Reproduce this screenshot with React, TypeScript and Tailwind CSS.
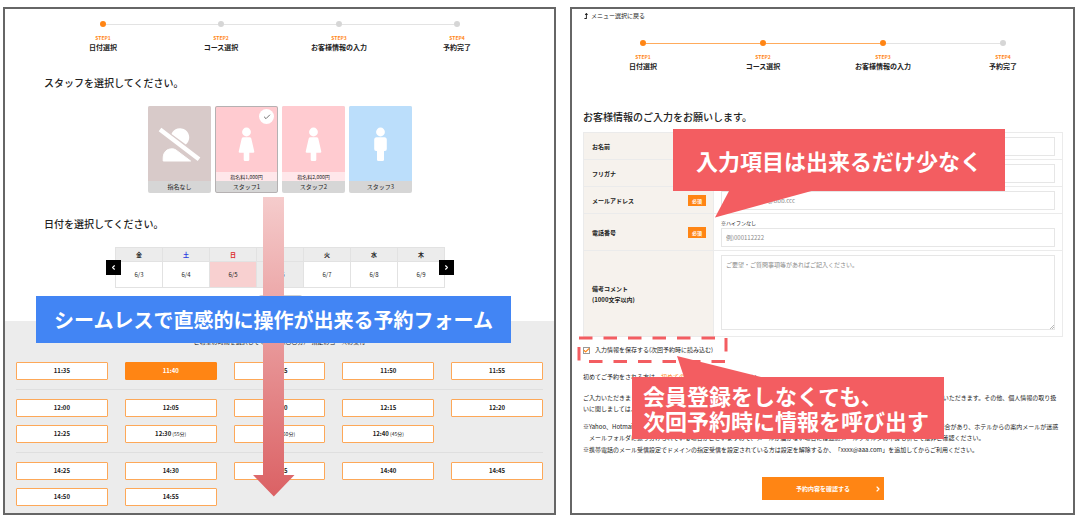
import React from "react";
import { FaLevelUpAlt } from "react-icons/fa";
import { Check, ChevronLeft, ChevronRight } from "lucide-react";

const stepNames = ["日付選択", "コース選択", "お客様情報の入力", "予約完了"];

function Steps({ current }: { current: number }) {
  return (
    <ol className="grid grid-cols-4">
      {stepNames.map((name, i) => {
        const done = i < current;
        const before = i === 0 ? "bg-transparent" : done ? "bg-[#ffab5c]" : "bg-[#e3e3e3]";
        const after =
          i === stepNames.length - 1 ? "bg-transparent" : i + 1 < current ? "bg-[#ffab5c]" : "bg-[#e3e3e3]";
        return (
          <li key={name} className="flex flex-col items-center">
            <div className="flex w-full items-center">
              <span className={`h-px flex-1 ${before}`} />
              <span className={`size-1.5 rounded-full ${done ? "bg-[#ff8514]" : "bg-[#d6d6d6]"}`} />
              <span className={`h-px flex-1 ${after}`} />
            </div>
            <span className="mt-[7px] text-[5px] leading-[8px] font-bold text-[#ff8514]">STEP{i + 1}</span>
            <span className="text-[7px] leading-[10px] font-bold text-[#222]">{name}</span>
          </li>
        );
      })}
    </ol>
  );
}

function NoStaffIcon() {
  return (
    <svg viewBox="0 0 63 66" className="absolute inset-0 size-full" aria-hidden="true">
      <path d="M23.5 28 A9.2 9.2 0 1 1 37.8 38.6 Z" fill="#fff" />
      <path d="M15.2 55 V52 C15.2 46 19 42.8 24 42.8 C25.6 42.8 26.8 43.2 28 44 L42.6 55 Z" fill="#fff" stroke="#fff" strokeWidth="1" strokeLinejoin="round" />
      <path d="M12 23.5 L51 53.3" stroke="#fff" strokeWidth="4.4" />
    </svg>
  );
}

function WomanIcon() {
  return (
    <svg viewBox="0 0 63 66" className="absolute inset-0 size-full" aria-hidden="true">
      <g fill="#fff">
        <circle cx="31.5" cy="26" r="4.4" />
        <path d="M28.6 31.2 h5.8 q1.5 0 1.9 1.4 l3 12.8 q0.2 1.3 -1.2 1.3 h-3.8 v7 q0 1.4 -1.4 1.4 h-2.8 q-1.4 0 -1.4 -1.4 v-7 h-3.8 q-1.4 0 -1.2 -1.3 l3 -12.8 q0.4 -1.4 1.9 -1.4 z" />
      </g>
    </svg>
  );
}

function ManIcon() {
  return (
    <svg viewBox="0 0 63 66" className="absolute inset-0 size-full" aria-hidden="true">
      <g fill="#fff">
        <circle cx="31.5" cy="26" r="4.4" />
        <path d="M27.6 31.2 h7.8 q2.4 0 2.4 2.6 v9.2 q0 1.9 -1.9 1.9 h-0.9 v8.8 q0 1.4 -1.4 1.4 h-4.2 q-1.4 0 -1.4 -1.4 v-8.8 h-0.9 q-1.9 0 -1.9 -1.9 v-9.2 q0 -2.6 2.4 -2.6 z" />
      </g>
    </svg>
  );
}

const staff = [
  { name: "指名なし", fee: "", bg: "bg-[#d8cac9]", icon: <NoStaffIcon />, selected: false },
  { name: "スタッフ1", fee: "指名料1,000円", bg: "bg-[#ffcbd0]", icon: <WomanIcon />, selected: true },
  { name: "スタッフ2", fee: "指名料2,000円", bg: "bg-[#ffcbd0]", icon: <WomanIcon />, selected: false },
  { name: "スタッフ3", fee: "", bg: "bg-[#bbdefb]", icon: <ManIcon />, selected: false },
];

const days = [
  { day: "金", date: "6/3", head: "text-[#222]", cell: "bg-white" },
  { day: "土", date: "6/4", head: "text-[#2b3ce0]", cell: "bg-white" },
  { day: "日", date: "6/5", head: "text-[#dc2626]", cell: "bg-[#f8d0d0]" },
  { day: "月", date: "6/6", head: "text-[#222]", cell: "bg-[#ececec]" },
  { day: "火", date: "6/7", head: "text-[#222]", cell: "bg-white" },
  { day: "水", date: "6/8", head: "text-[#222]", cell: "bg-white" },
  { day: "木", date: "6/9", head: "text-[#222]", cell: "bg-white" },
];

const slotGroups: { time: string; note?: string; selected?: boolean }[][] = [
  [{ time: "11:35" }, { time: "11:40", selected: true }, { time: "11:45" }, { time: "11:50" }, { time: "11:55" }],
  [
    { time: "12:00" },
    { time: "12:05" },
    { time: "12:10" },
    { time: "12:15" },
    { time: "12:20" },
    { time: "12:25" },
    { time: "12:30", note: "(55分)" },
    { time: "12:35", note: "(50分)" },
    { time: "12:40", note: "(45分)" },
  ],
  [
    { time: "14:25" },
    { time: "14:30" },
    { time: "14:35" },
    { time: "14:40" },
    { time: "14:45" },
    { time: "14:50" },
    { time: "14:55" },
  ],
];

function SchedulePanel() {
  return (
    <section className="relative flex flex-col border-2 border-[#666] bg-white">
      <div className="flex flex-1 flex-col pt-3 pr-[38px] pl-[39px]">
        <Steps current={1} />
        <h2 className="mt-6 text-[10px] leading-[14px] font-medium">スタッフを選択してください。</h2>
        <div className="mt-4 flex justify-center gap-1">
          {staff.map((s) => (
            <button
              key={s.name}
              type="button"
              aria-pressed={s.selected}
              className="relative flex w-[63px] flex-col overflow-hidden rounded-xs bg-[#d6d6d6] text-center"
            >
              <span className={`relative block h-[75px] w-full ${s.bg}`}>
                <span className="absolute inset-x-0 top-0 h-[66px]">{s.icon}</span>
                {s.fee && (
                  <span className="absolute inset-x-0 bottom-0 bg-[#ffe7ea] text-[5px] leading-[9px]">{s.fee}</span>
                )}
              </span>
              <span className="block w-full text-[6px] leading-[12px]">{s.name}</span>
              {s.selected && (
                <>
                  <span className="absolute inset-0 rounded-xs border border-[#b5b1b2]" />
                  <span className="absolute top-[3px] right-1 flex size-[15px] items-center justify-center rounded-full bg-white">
                    <Check size={8} strokeWidth={2.5} color="#555" />
                  </span>
                </>
              )}
            </button>
          ))}
        </div>
        <h2 className="mt-6 text-[10px] leading-[14px] font-medium">日付を選択してください。</h2>
        <div className="relative mx-auto mt-4 w-[330px]">
          <table className="w-full table-fixed border-separate border-spacing-0 border-t border-l border-[#e2e2e2] text-center text-[6px] leading-[8px]">
            <thead>
              <tr>
                {days.map((d) => (
                  <th key={d.day} scope="col" className={`h-3.5 border-r border-b border-[#e2e2e2] bg-[#ececec] p-0 font-bold ${d.head}`}>
                    {d.day}
                  </th>
                ))}
              </tr>
            </thead>
            <tbody>
              <tr>
                {days.map((d) => (
                  <td key={d.day} className={`h-[26px] border-r border-b border-[#e2e2e2] p-0 ${d.cell}`}>
                    {d.date}
                  </td>
                ))}
              </tr>
            </tbody>
          </table>
          <button type="button" aria-label="前の週" className="absolute top-[13px] -left-[9px] flex size-[15px] items-center justify-center bg-black text-white">
            <ChevronLeft size={7} strokeWidth={4} />
          </button>
          <button type="button" aria-label="次の週" className="absolute top-[13px] -right-[9px] flex size-[15px] items-center justify-center bg-black text-white">
            <ChevronRight size={7} strokeWidth={4} />
          </button>
        </div>
        <div className="mx-auto mt-[7px] mb-3 h-3.5 w-[43px] rounded-xs bg-[#d0d0d0]" />
      </div>

      <div className="bg-[#ececec] px-[11px] pt-4 pb-[7px]">
        <p className="text-center text-[6px] leading-[10px]">ご希望の時間を選択してください(〇〇分)　指定のコースの受付</p>
        <div className="mt-[15px] flex flex-col">
          {slotGroups.map((group, gi) => (
            <div
              key={gi}
              className={`grid grid-cols-5 gap-x-[17px] gap-y-2 ${gi > 0 ? "border-t border-[#dfdfdf] pt-[9px]" : ""} ${gi < slotGroups.length - 1 ? "pb-[9px]" : ""}`}
            >
              {group.map((s) => (
                <button
                  key={s.time}
                  type="button"
                  className={`h-[18px] rounded-[1px] border text-[6px] leading-[8px] ${s.selected ? "border-[#ff8514] bg-[#ff8514] text-white" : "border-[#fda858] bg-white text-[#222]"}`}
                >
                  <span className="font-bold">{s.time}</span>
                  {s.note && <span className="text-[5px]"> {s.note}</span>}
                </button>
              ))}
            </div>
          ))}
        </div>
      </div>

      <svg className="pointer-events-none absolute top-[188px] left-[248px]" width="42" height="300" viewBox="0 0 42 300" aria-hidden="true">
        <defs>
          <linearGradient id="flow" x1="0" y1="0" x2="0" y2="1">
            <stop offset="0" stopColor="#f5cccc" />
            <stop offset="1" stopColor="#db6164" />
          </linearGradient>
        </defs>
        <path d="M10 0 H31 V278 H41.5 L20.8 299.5 L0 278 H10 Z" fill="url(#flow)" />
      </svg>
      <p className="absolute top-[287px] right-[43px] left-[31px] bg-[#4285f4] text-center text-[20px] leading-[47px] font-bold whitespace-nowrap text-white">
        シームレスで直感的に操作が出来る予約フォーム
      </p>
    </section>
  );
}

function FieldRow({
  id,
  label,
  required,
  children,
}: {
  id: string;
  label: React.ReactNode;
  required?: boolean;
  children: React.ReactNode;
}) {
  return (
    <tr>
      <th scope="row" className="w-[130px] border-r border-b border-[#ebebeb] bg-[#f6f2ed] py-0 pr-[7px] pl-2 text-left align-middle">
        <span className="flex items-center justify-between">
          <label htmlFor={id} className="leading-[11px] font-bold">
            {label}
          </label>
          {required && (
            <span className="w-[18px] bg-[#ff8514] text-center text-[5px] leading-[11px] font-bold text-white">必須</span>
          )}
        </span>
      </th>
      <td className="border-b border-[#ebebeb] px-[7px] pt-1 pb-[3px] align-top">{children}</td>
    </tr>
  );
}

const inputClass =
  "block h-[19px] w-full border border-[#e6e6e6] bg-white px-1 text-[6px] placeholder:text-[#8a8a8a] outline-none";

function CustomerPanel() {
  return (
    <section className="relative border-2 border-[#666] bg-white pt-0.5 pr-2.5 pb-[13px] pl-[11px] text-[6px]">
      <a href="#menu" className="flex items-center gap-0.5 leading-[10px]">
        <FaLevelUpAlt size={6} />
        メニュー選択に戻る
      </a>
      <div className="mt-[19px]">
        <Steps current={3} />
      </div>
      <h2 className="mt-[39px] text-[10px] leading-[14px] font-medium">お客様情報のご入力をお願いします。</h2>
      <form>
        <table className="mt-2 w-full border-separate border-spacing-0 border-t border-r border-l border-[#ebebeb]">
          <tbody>
            <FieldRow id="name" label="お名前" required>
              <input id="name" type="text" className={inputClass} />
            </FieldRow>
            <FieldRow id="kana" label="フリガナ" required>
              <input id="kana" type="text" className={inputClass} />
            </FieldRow>
            <FieldRow id="email" label="メールアドレス" required>
              <input id="email" type="email" placeholder="例)aaaaaaaaaa@bbb.ccc" className={inputClass} />
            </FieldRow>
            <FieldRow id="tel" label="電話番号" required>
              <span className="block text-[5px] leading-[10px]">※ハイフンなし</span>
              <input id="tel" type="tel" placeholder="例)000112222" className={inputClass} />
            </FieldRow>
            <FieldRow
              id="comment"
              label={
                <>
                  備考コメント
                  <br />
                  (1000文字以内)
                </>
              }
            >
              <span className="relative mb-[3px] block">
                <textarea
                  id="comment"
                  placeholder="ご要望・ご質問事項等があればご記入ください。"
                  className="block h-[75px] w-full resize-none border border-[#e6e6e6] bg-white px-1 py-1 text-[6px] leading-[10px] outline-none placeholder:text-[#8a8a8a]"
                />
                <svg className="absolute right-px bottom-px" width="4" height="4" viewBox="0 0 4 4" stroke="#888" strokeWidth="0.6" aria-hidden="true">
                  <path d="M0 4 L4 0 M2 4 L4 2" />
                </svg>
              </span>
            </FieldRow>
          </tbody>
        </table>

        <label className="mt-2 flex items-center gap-[5px] leading-[10px]">
          <span className="relative flex size-[7px]">
            <input
              type="checkbox"
              defaultChecked
              className="peer size-[7px] appearance-none border border-[#999] bg-white"
            />
            <Check size={7} strokeWidth={4} color="#ff8514" className="pointer-events-none absolute inset-0 hidden peer-checked:block" />
          </span>
          入力情報を保存する(次回予約時に読み込む)
        </label>

        <div className="pr-0.5 leading-[11px] [text-spacing-trim:space-all]">
          <p className="mt-4">
            初めてご予約をされる方は、
            <a href="#first" className="text-[#ff8514]">
              初めてのお客様へ
            </a>
            をご確認ください。
          </p>
          <p className="mt-2.5">
            ご入力いただきました個人情報は、ご予約の確認及びご本人様への連絡、サービスの向上を目的とした範囲内で厳重に管理し利用していただきます。その他、個人情報の取り扱いに関しましては、プライバシーポリシーをご確認ください。
          </p>
          <ul className="mt-[7px] space-y-px">
            <li className="pl-1.5 -indent-1.5">
              ※Yahoo、Hotmail、Gmail等のフリーメールアドレスをご利用の場合、ご予約完了メールやお知らせメールが正常に届かないなどの場合があり、ホテルからの案内メールが迷惑メールフォルダに振り分けられている場合がございますので、メールが届かない場合には迷惑メールフォルダの中身も併せて是非ご確認ください。
            </li>
            <li className="pl-1.5 -indent-1.5">
              ※携帯電話のメール受信設定でドメインの指定受信を設定されている方は設定を解除するか、「xxxx@aaa.com」を追加してからご利用ください。
            </li>
          </ul>
        </div>

        <button
          type="submit"
          className="relative mx-auto mt-[22px] flex h-[23px] w-[122px] items-center justify-center bg-[#ff8514] font-bold text-white"
        >
          予約内容を確認する
          <ChevronRight size={8} strokeWidth={3.5} className="absolute right-0.5" />
        </button>
      </form>

      <svg className="pointer-events-none absolute top-[327px] left-[5px]" width="152" height="28" viewBox="0 0 152 28" aria-hidden="true">
        <path
          d="M2 2 H149 V25.5 H2 Z"
          fill="none"
          stroke="#f35d61"
          strokeWidth="3"
          strokeDasharray="13.5 11"
        />
      </svg>
      <div className="absolute top-[120px] left-[101px] w-[332px] bg-[#f35d61] text-center text-[22px] leading-[62px] font-bold whitespace-nowrap text-white">
        入力項目は出来るだけ少なく
        <svg className="absolute top-full left-[42px]" width="97" height="27" viewBox="0 0 97 27" aria-hidden="true">
          <path d="M14 0 H96.5 L0 26.5 Z" fill="#f35d61" />
        </svg>
      </div>
      <div className="absolute top-[368px] left-[60px] w-[312px] bg-[#f35d61] py-1.5 pl-[11px] text-[22px] leading-[25px] font-bold whitespace-nowrap text-white">
        会員登録をしなくても、
        <br />
        次回予約時に情報を呼び出す
        <svg className="absolute bottom-full left-[45px]" width="84" height="21" viewBox="0 0 84 21" aria-hidden="true">
          <path d="M0 0 L7 21 H84 Z" fill="#f35d61" />
        </svg>
      </div>
    </section>
  );
}

export default function App() {
  return (
    <main
      lang="ja"
      className="grid grid-cols-[553fr_505fr] gap-3.5 bg-white pt-[7px] pr-[5px] pb-[5px] pl-[3px] font-['Noto_Sans_CJK_JP',sans-serif] text-[#222]"
    >
      <SchedulePanel />
      <CustomerPanel />
    </main>
  );
}
